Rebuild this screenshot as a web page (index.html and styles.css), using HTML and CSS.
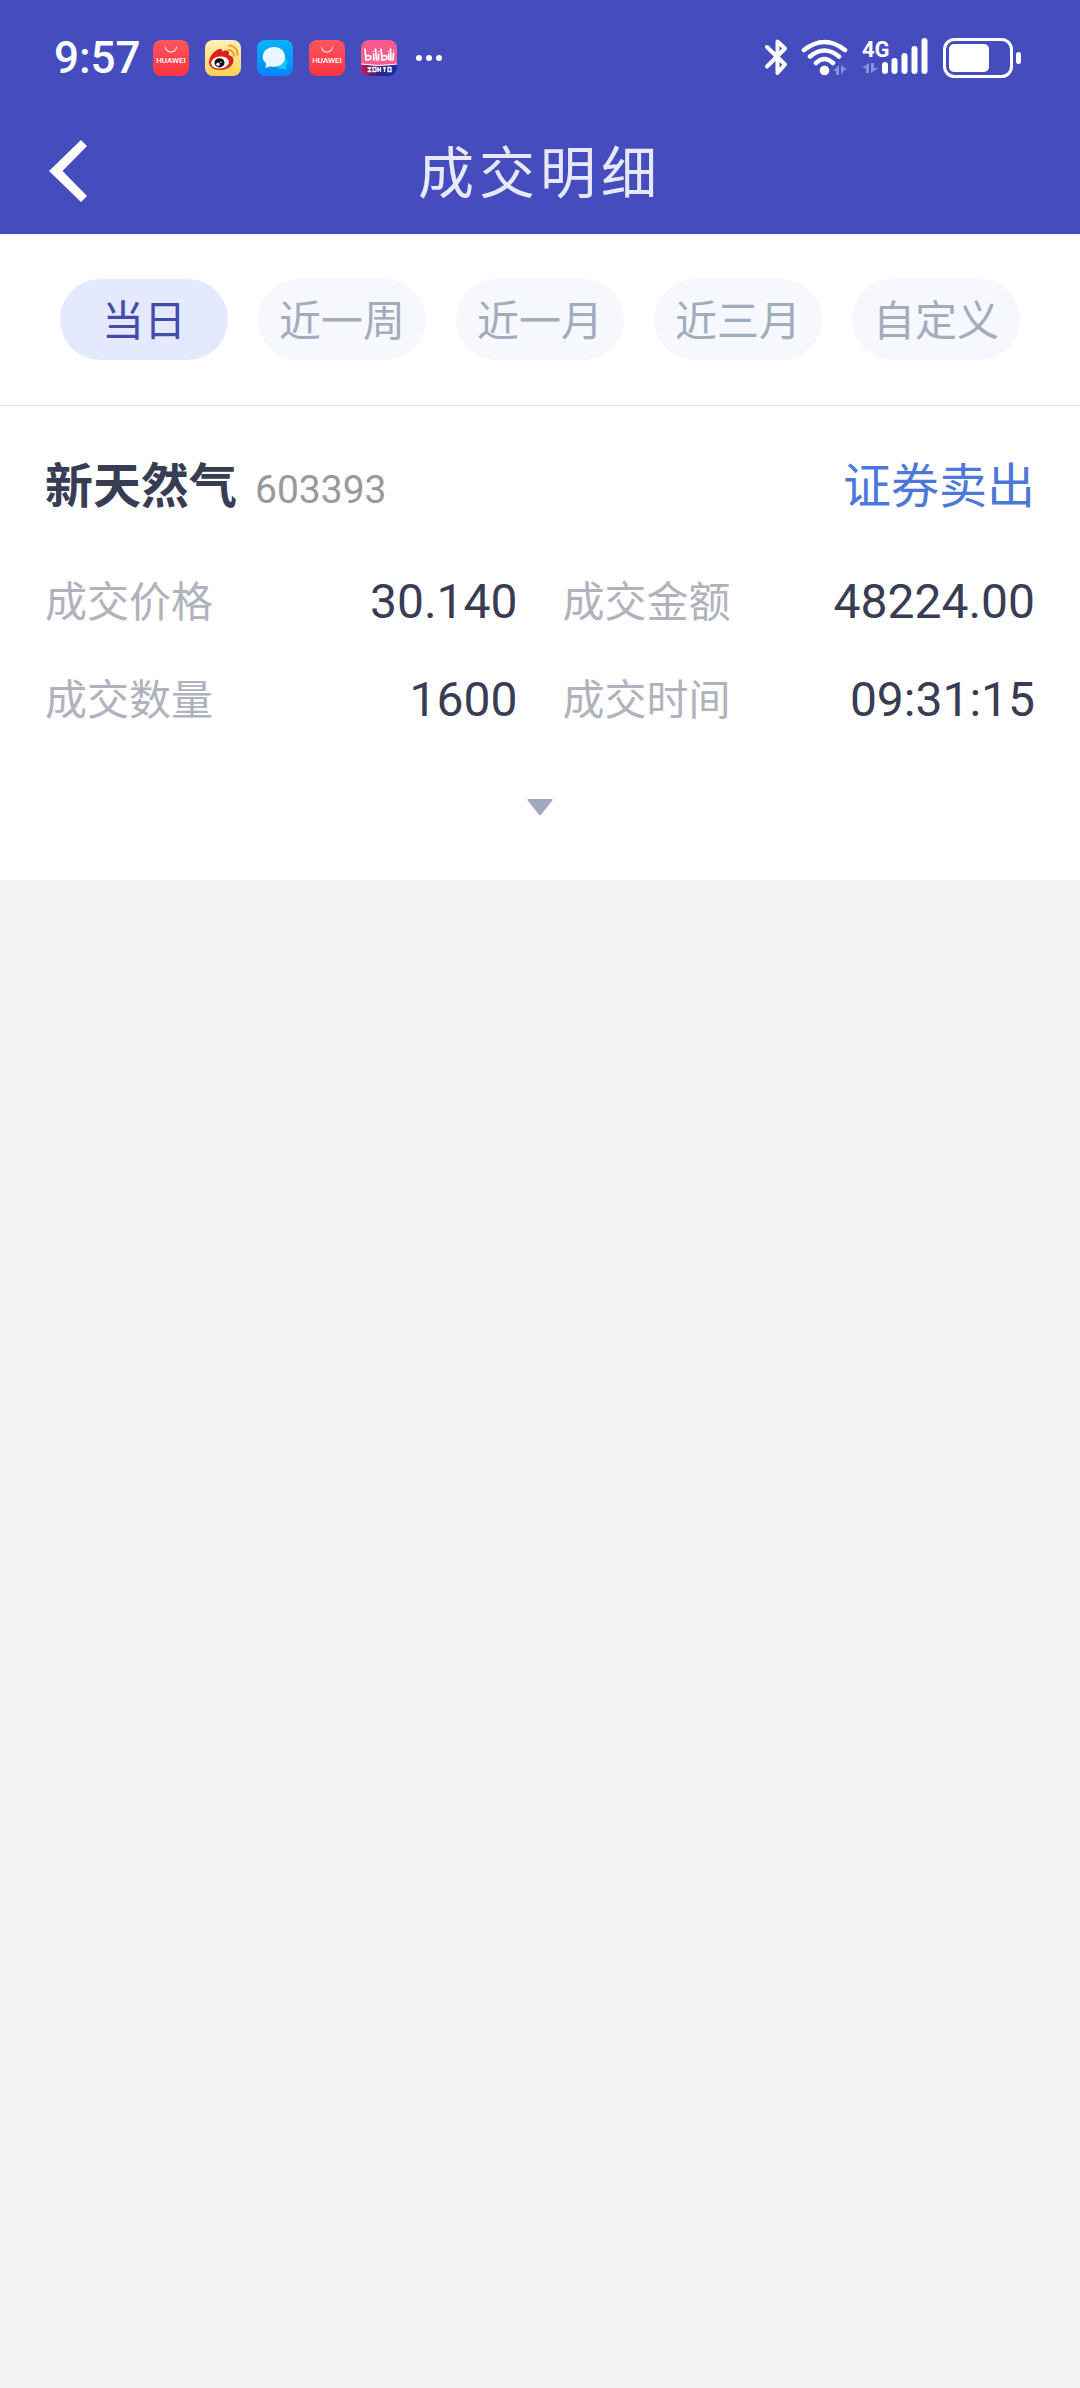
FILE: index.html
```html
<!DOCTYPE html>
<html lang="zh-CN">
<head>
<meta charset="utf-8">
<meta name="viewport" content="width=device-width, initial-scale=1">
<title>成交明细</title>
<link rel="stylesheet" href="styles.css">
</head>
<body>
<header class="header">
  <div class="status">
    <div class="status-left">
      <span class="clock">9:57</span>
      <svg class="app" viewBox="0 0 36 36" aria-hidden="true">
        <defs>
          <linearGradient id="red" x1="0" y1="0" x2="0" y2="1"><stop offset="0" stop-color="#fb5660"/><stop offset="1" stop-color="#fb3540"/></linearGradient>
          <linearGradient id="yellow" x1="0" y1="0" x2="0" y2="1"><stop offset="0" stop-color="#fff0b8"/><stop offset="1" stop-color="#ffd24e"/></linearGradient>
          <linearGradient id="blue" x1="0" y1="0" x2="0" y2="1"><stop offset="0" stop-color="#05b4fb"/><stop offset="1" stop-color="#0783fd"/></linearGradient>
          <linearGradient id="band" x1="0" y1="0" x2="1" y2="0"><stop offset="0" stop-color="#d3164e"/><stop offset=".45" stop-color="#34207f"/><stop offset="1" stop-color="#0b2fb5"/></linearGradient>
          <clipPath id="tile"><rect width="36" height="36" rx="8"/></clipPath>
        </defs>
        <rect width="36" height="36" rx="8" fill="url(#red)"/>
        <path d="M12.500 7a5.500 5 0 0 0 11 0" fill="none" stroke="#ffd9db" stroke-width="1.200" stroke-linecap="round"/>
        <text class="huawei" x="18" y="23">HUAWEI</text>
      </svg>
      <svg class="app" viewBox="0 0 36 36" aria-hidden="true">
        <rect width="36" height="36" rx="8" fill="url(#yellow)"/>
        <path d="M4 22c0-6 7-13 11-13 3 0 2.500 2 2 3 3-2 7-2 7 1 0 1-.5 2-.5 2 3 .5 5 2.500 5 5.500 0 5-6 9.500-13 9.500S4 27 4 22z" fill="#dc1f1c"/>
        <ellipse cx="15" cy="22.500" rx="9" ry="6" fill="#fff" transform="rotate(-7 15 22.500)"/>
        <ellipse cx="14.500" cy="22.800" rx="5" ry="4.600" fill="#0b0b0b"/>
        <circle cx="13" cy="24.300" r="1.700" fill="#fff"/><circle cx="15.800" cy="22.300" r=".8" fill="#fff"/>
        <path d="M23.500 10a5.500 5.500 0 0 1 5.500 6M24 5.500c5 0 9 4 8.500 9.500" fill="none" stroke="#eba32c" stroke-width="2" stroke-linecap="round"/>
      </svg>
      <svg class="app" viewBox="0 0 36 36" aria-hidden="true">
        <rect width="36" height="36" rx="8" fill="url(#blue)"/>
        <path d="M20 25a6 5 0 1 1 10-3c0 2-1 3-1.500 4l1 3.500-4-1c-3 1-5-1-5.500-3.500z" fill="#0bcff5"/>
        <path d="M17 7c6.500 0 11 4.300 11 10s-4.500 9.800-11 9.800c-1.500 0-3-.2-4-.6L8.500 28l.7-4.500C7 21.700 5.800 19.500 5.800 17 5.800 11.300 10.500 7 17 7z" fill="#e9f7ff"/>
      </svg>
      <svg class="app" viewBox="0 0 36 36" aria-hidden="true">
        <rect width="36" height="36" rx="8" fill="url(#red)"/>
        <path d="M12.500 7a5.500 5 0 0 0 11 0" fill="none" stroke="#ffd9db" stroke-width="1.200" stroke-linecap="round"/>
        <text class="huawei" x="18" y="23">HUAWEI</text>
      </svg>
      <svg class="app" viewBox="0 0 36 36" aria-hidden="true">
        <g clip-path="url(#tile)">
          <rect width="36" height="36" fill="#fb5a8c"/>
          <path d="M0 24q18 4 36 0v12H0z" fill="url(#band)"/>
          <path d="M0 24q18 3 36 0" fill="none" stroke="#fff" stroke-width="1"/>
          <path d="M4 9l1 11q5 0 5-2.500T5 16M12.500 14l.5 6M14.500 9l1 11M17.500 14v6M20 9l1 11q5 0 5-2.500T21 16M27.500 14l.5 6M29.500 9l.5 11M32.500 13l-.5 7" fill="none" stroke="#fff" stroke-width="1.700" stroke-linecap="round"/>
          <path d="M12.300 11v1M17.700 11v1M27.300 11v1M32.800 10v1" stroke="#fff" stroke-width="1.300"/>
          <path d="M6.500 28h4M8.500 27v5M6.500 31.500h4M12 27.500h3v4h-3zM17 27v5M16 29.500h4M19.500 27v5M22 28h3M23.500 27v5M27 27.500h3v4h-3z" fill="none" stroke="#fff" stroke-width="1.300"/>
        </g>
      </svg>
      <svg class="more" viewBox="0 0 28 8" aria-hidden="true"><g fill="#fff"><circle cx="4" cy="4" r="3"/><circle cx="14" cy="4" r="3"/><circle cx="24" cy="4" r="3"/></g></svg>
    </div>
    <div class="status-right">
      <svg width="24" height="40" viewBox="0 0 24 40" aria-hidden="true"><path d="M3 9l18 17.500L13.500 35V3.500L21 10.500 3 28.500" fill="none" stroke="#fff" stroke-width="4" stroke-linecap="round" stroke-linejoin="round"/></svg>
      <svg width="48" height="40" viewBox="0 0 48 40" aria-hidden="true">
        <g fill="none" stroke="#fff" stroke-width="4.500" stroke-linecap="round"><path d="M3 12q20.500-16 41 0M9 18.500q14.500-12 29 0M15 25q8.500-8 17 0"/></g>
        <circle cx="23.500" cy="32.500" r="4.800" fill="#fff"/>
        <path d="M38 27v10h-3v-4h-3zM40 37V27l6 5h-3z" fill="#8a90dd"/>
      </svg>
      <svg width="68" height="40" viewBox="0 0 68 40" aria-hidden="true">
        <text class="net" x="0" y="19">4G</text>
        <path d="M7 25v10H4v-5H0zM9 35V25h3v5h4z" fill="#8a90dd"/>
        <path d="M23 27v6M32.500 23v10M42.500 18v15M52.500 11v22M62.500 3v30" stroke="#fff" stroke-width="6" stroke-linecap="round"/>
      </svg>
      <svg width="78" height="40" viewBox="0 0 78 40" aria-hidden="true">
        <rect x="1.500" y="1.500" width="67" height="37" rx="10" fill="none" stroke="#fff" stroke-width="3"/>
        <rect x="6" y="6" width="40" height="28" rx="5" fill="#fff"/>
        <rect x="73" y="14" width="5" height="12" rx="2.500" fill="#fff"/>
      </svg>
    </div>
  </div>
  <div class="navbar">
    <button class="back" type="button" aria-label="返回"><svg width="38" height="64" viewBox="0 0 38 64" aria-hidden="true"><path d="M32 1l6 6-24.500 25L38 57l-6 6L0 32z" fill="#fff"/></svg></button>
    <h1 class="title">成交明细</h1>
  </div>
</header>
<nav class="tabs">
  <button class="tab tab-active" type="button">当日</button>
  <button class="tab" type="button">近一周</button>
  <button class="tab" type="button">近一月</button>
  <button class="tab" type="button">近三月</button>
  <button class="tab" type="button">自定义</button>
</nav>
<main>
  <article class="trade">
    <div class="trade-head">
      <h2 class="name">新天然气</h2>
      <span class="code">603393</span>
      <span class="side">证券卖出</span>
    </div>
    <dl class="facts">
      <div class="fact"><dt>成交价格</dt><dd>30.140</dd></div>
      <div class="fact"><dt>成交金额</dt><dd>48224.00</dd></div>
      <div class="fact"><dt>成交数量</dt><dd>1600</dd></div>
      <div class="fact"><dt>成交时间</dt><dd>09:31:15</dd></div>
    </dl>
    <button class="expand" type="button" aria-label="展开"><svg width="28" height="18" viewBox="0 0 28 18" aria-hidden="true"><path d="M2.500 1h23q2 0 .8 1.600L15.300 16.500q-1.300 1.400-2.600 0L1.700 2.600Q.5 1 2.500 1z" fill="#a0a9bc"/></svg></button>
  </article>
</main>
</body>
</html>
```
FILE: styles.css
```css
* { box-sizing: border-box; margin: 0; padding: 0; }

body {
  min-height: 100vh;
  background: #f3f4f6;
  color: #383d54;
  font-family: Roboto, "Noto Sans CJK SC", sans-serif;
}

button { border: 0; background: none; font: inherit; cursor: pointer; }
svg { display: block; flex: none; }

.header { background: #444cbe; color: #fff; }

.status {
  display: flex;
  justify-content: space-between;
  height: 108px;
  padding: 8px 59px 0 54px;
}
.status-left, .status-right { display: flex; align-items: center; }
.status-left { gap: 16px; }
.status-right { gap: 13px; }
.clock { font-size: 44px; font-weight: 500; line-height: 48px; width: 83px; white-space: nowrap; }
.app { width: 36px; height: 36px; }
.more { width: 28px; height: 8px; margin-left: 2px; }
.huawei { fill: #fff; font: 500 8px Roboto, sans-serif; text-anchor: middle; }
.net { fill: #fff; font: 700 22px Roboto, sans-serif; }

.navbar {
  display: grid;
  grid-template-columns: 96px 1fr 96px;
  align-items: center;
  height: 126px;
}
.back { padding-left: 49px; }
.title {
  padding-top: 6px;
  color: #e8e9f8;
  font-size: 56px;
  font-weight: 400;
  line-height: 64px;
  letter-spacing: 5px;
  text-align: center;
}

.tabs {
  display: grid;
  grid-template-columns: repeat(5, 1fr);
  gap: 30px;
  padding: 45px 60px;
  background: #fff;
  border-bottom: 1px solid #e2e2e4;
}
.tab {
  height: 81px;
  padding-top: 4px;
  border-radius: 41px;
  background: #f6f8fd;
  color: #a3acbd;
  font-size: 42px;
  line-height: 48px;
  white-space: nowrap;
}
.tab-active { background: #e4e9fe; color: #444ba8; }

.trade { padding: 51px 45px 0; background: #fff; }
.trade-head { display: flex; align-items: baseline; line-height: 60px; }
.name { font-size: 48px; font-weight: 700; }
.code { margin-left: 18px; color: #999; font-size: 39px; }
.side { margin-left: auto; color: #4c78dc; font-size: 48px; }

.facts {
  display: grid;
  grid-template-columns: 1fr 1fr;
  gap: 38px 45px;
  padding-top: 53px;
}
.fact { display: flex; justify-content: space-between; line-height: 60px; }
.fact dt { color: #b0b2bd; font-size: 42px; }
.fact dd { font-size: 48px; line-height: 58px; }

.expand { display: flex; justify-content: center; width: 100%; padding: 67px 0 64px; }
```
